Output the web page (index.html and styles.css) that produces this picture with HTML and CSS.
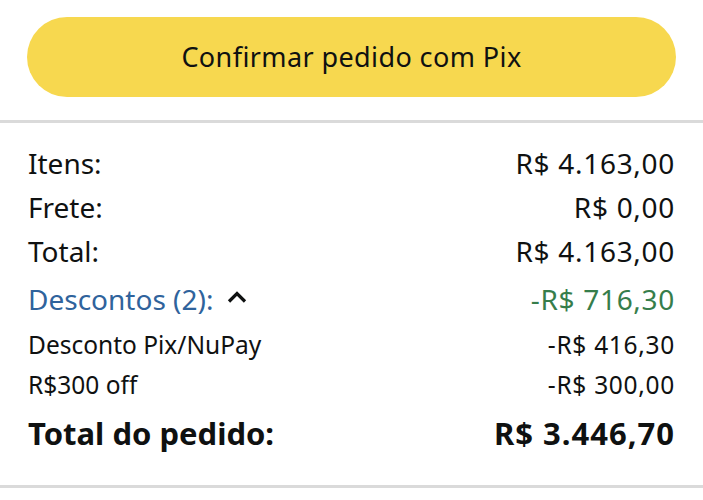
FILE: index.html
```html
<!DOCTYPE html>
<html>

<head>
    <title>Resumo do pedido</title>

    <link rel="stylesheet" href="styles.css">
</head>

<body>
    <div class="actions">
        <button class="pix-button">Confirmar pedido com Pix</button>
    </div>

    <div class="divider"></div>

    <!-- Order summary -->
    <div class="summary">
        <div class="row">
            <span>Itens:</span>
            <span class="amount">R$ 4.163,00</span>
        </div>
        <div class="row">
            <span>Frete:</span>
            <span class="amount">R$ 0,00</span>
        </div>
        <div class="row">
            <span>Total:</span>
            <span class="amount">R$ 4.163,00</span>
        </div>
        <div class="row discounts">
            <span class="discount-toggle">Descontos (2):
                <svg class="chevron" width="20" height="12" viewBox="0 0 20 12" fill="none"
                    xmlns="http://www.w3.org/2000/svg">
                    <path d="M2 10.5L10 2.5L18 10.5" stroke="currentColor" stroke-width="3.2"></path>
                </svg>
            </span>
            <span class="amount saving">-R$ 716,30</span>
        </div>
        <div class="row sub">
            <span>Desconto Pix/NuPay</span>
            <span class="amount">-R$ 416,30</span>
        </div>
        <div class="row sub">
            <span>R$300 off</span>
            <span class="amount">-R$ 300,00</span>
        </div>
        <div class="row grand">
            <span>Total do pedido:</span>
            <span class="amount">R$ 3.446,70</span>
        </div>
    </div>

    <div class="divider"></div>
</body>

</html>
```

FILE: styles.css
```css
body {
    margin: 0;
    background-color: #fff;
    font-family: "Noto Sans", "Open Sans", sans-serif;
    color: #0f1111;
}

/* Pay button */
.actions {
    padding: 17px 27px 23px;
}

.pix-button {
    display: block;
    width: 100%;
    height: 80px;
    padding-bottom: 2px;
    border: none;
    border-radius: 40px;
    background-color: #f7d84f;
    color: #0f1111;
    font-family: "Noto Sans", "Open Sans", sans-serif;
    font-size: 27px;
    letter-spacing: 0.4px;
    cursor: pointer;
}

.divider {
    height: 3px;
    background-color: #dadada;
}

/* Summary rows */
.summary {
    padding: 18px 28px 27px;
}

.row {
    display: flex;
    justify-content: space-between;
    align-items: center;
    height: 44px;
    font-size: 28px;
}

.amount {
    letter-spacing: 0.7px;
}

.discounts {
    margin-top: 4px;
}

.discount-toggle {
    display: flex;
    align-items: center;
    gap: 14px;
    color: #2f639c;
}

.chevron {
    color: #0f1111;
    margin-bottom: 4px;
}

.saving {
    color: #367d4b;
}

.row.sub {
    height: 40px;
    font-size: 24.5px;
}

.discounts + .sub {
    margin-top: 3px;
}

.row.grand {
    height: 50px;
    margin-top: 4px;
    font-size: 31px;
    font-weight: bold;
}

.row.grand .amount {
    letter-spacing: 1px;
}
```
